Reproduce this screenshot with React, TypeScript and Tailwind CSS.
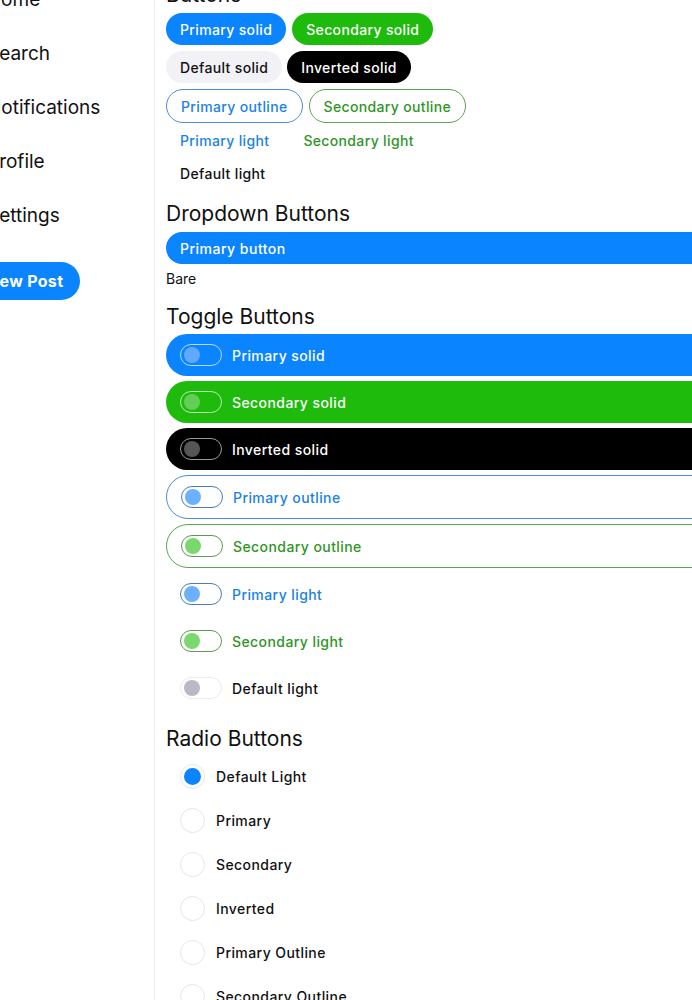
import React from 'react';

const font = { fontFamily: 'Inter, "Noto Sans", sans-serif' };

const navItems = ['Home', 'Search', 'Notifications', 'Profile', 'Settings'];

type ToggleKind =
  | 'primarySolid'
  | 'secondarySolid'
  | 'invertedSolid'
  | 'primaryOutline'
  | 'secondaryOutline'
  | 'primaryLight'
  | 'secondaryLight'
  | 'defaultLight';

const toggles: { kind: ToggleKind; label: string; row: string; track: string; knob: string; text: string }[] = [
  { kind: 'primarySolid', label: 'Primary solid', row: 'bg-[#0a84ff] h-[42px]', track: 'border-white/70', knob: 'bg-[#5fa9ff]', text: 'text-white' },
  { kind: 'secondarySolid', label: 'Secondary solid', row: 'bg-[#1eba0c] h-[42px]', track: 'border-white/70', knob: 'bg-[#62cf55]', text: 'text-white' },
  { kind: 'invertedSolid', label: 'Inverted solid', row: 'bg-black h-[42px]', track: 'border-[#9a9a9a]', knob: 'bg-[#555555]', text: 'text-white' },
  { kind: 'primaryOutline', label: 'Primary outline', row: 'h-[44px] border-[1.5px] border-[#4a8fd8] pl-[13px]', track: 'border-[#4b7bbd]', knob: 'bg-[#6cb1ff]', text: 'text-[#1a82e6]' },
  { kind: 'secondaryOutline', label: 'Secondary outline', row: 'h-[44px] border-[1.5px] border-[#5aa352] pl-[13px]', track: 'border-[#5a9a52]', knob: 'bg-[#7bd86f]', text: 'text-[#2f9526]' },
  { kind: 'primaryLight', label: 'Primary light', row: 'h-[42px]', track: 'border-[#4b7bbd]', knob: 'bg-[#6cb1ff]', text: 'text-[#1a82e6]' },
  { kind: 'secondaryLight', label: 'Secondary light', row: 'h-[42px]', track: 'border-[#5a9a52]', knob: 'bg-[#7bd86f]', text: 'text-[#2f9526]' },
  { kind: 'defaultLight', label: 'Default light', row: 'h-[42px]', track: 'border-[#ececec]', knob: 'bg-[#b9b9c6]', text: 'text-[#111111]' },
];

const radios = ['Default Light', 'Primary', 'Secondary', 'Inverted', 'Primary Outline', 'Secondary Outline'];

const Pill = ({ className, children }: { className: string; children: React.ReactNode }) => (
  <button className={`h-[32px] px-[14px] rounded-full text-[14px] font-medium tracking-[0.025em] flex items-center ${className}`}>
    {children}
  </button>
);

const Heading = ({ children, className = '' }: { children: React.ReactNode; className?: string }) => (
  <h2 className={`text-[21px] leading-[28px] text-[#111111] ${className}`}>{children}</h2>
);

export default function App() {
  return (
    <div className="w-[692px] h-[1000px] overflow-hidden bg-white" style={font}>
      <div className="flex w-[900px] -ml-[45px] -mt-[27px] min-h-[1100px]">
        {/* sidebar */}
        <aside className="w-[200px] shrink-0 border-r border-[#efefef] pl-[32px]">
          <nav className="flex flex-col">
            {navItems.map((item) => (
              <a key={item} className="h-[54px] flex items-center text-[19px] text-[#111111]">
                {item}
              </a>
            ))}
          </nav>
          <button className="mt-[19px] h-[38px] -ml-[17px] px-[17px] rounded-full bg-[#0a84ff] text-white text-[16px] font-bold tracking-[0.02em]">
            New Post
          </button>
        </aside>

        {/* main */}
        <main className="flex-1 pl-[11px] pt-[8px]">
          <Heading>Buttons</Heading>
          <div className="mt-[4px] flex gap-[6px]">
            <Pill className="bg-[#0a84ff] text-white">Primary solid</Pill>
            <Pill className="bg-[#1eba0c] text-white">Secondary solid</Pill>
          </div>
          <div className="mt-[6px] flex gap-[5px]">
            <Pill className="bg-[#f1f1f6] text-[#111111]">Default solid</Pill>
            <Pill className="bg-black text-white">Inverted solid</Pill>
          </div>
          <div className="mt-[6px] flex gap-[6px]">
            <Pill className="h-[34px] border-[1.5px] border-[#4a8fd8] text-[#1a82e6]">Primary outline</Pill>
            <Pill className="h-[34px] border-[1.5px] border-[#5aa352] text-[#2f9526]">Secondary outline</Pill>
          </div>
          <div className="mt-[1px] flex gap-[6px]">
            <Pill className="text-[#1a82e6]">Primary light</Pill>
            <Pill className="text-[#2f9526]">Secondary light</Pill>
          </div>
          <div className="mt-[1px] flex">
            <Pill className="text-[#111111]">Default light</Pill>
          </div>

          <Heading className="mt-[11px]">Dropdown Buttons</Heading>
          <button className="mt-[4px] w-full h-[32px] rounded-full bg-[#0a84ff] text-white text-[14px] font-medium tracking-[0.035em] text-left px-[14px]">
            Primary button
          </button>
          <div className="h-[22px] flex items-center text-[14px] text-[#111111] mt-[3px]">Bare</div>

          <Heading className="mt-[14px]">Toggle Buttons</Heading>
          <div className="mt-[3px] flex flex-col gap-[5px]">
            {toggles.map((t) => (
              <div key={t.kind} className={`rounded-full flex items-center pl-[14px] ${t.row}`}>
                <span className={`w-[42px] h-[22px] rounded-full border-[1.5px] flex items-center pl-[3px] ${t.track}`}>
                  <span className={`w-[16px] h-[16px] rounded-full ${t.knob}`} />
                </span>
                <span className={`ml-[10px] text-[14px] font-medium tracking-[0.03em] ${t.text}`}>{t.label}</span>
              </div>
            ))}
          </div>

          <Heading className="mt-[16px]">Radio Buttons</Heading>
          <div className="mt-[1px] flex flex-col">
            {radios.map((r, i) => (
              <label key={r} className="h-[44px] flex items-center pl-[14px]">
                <span className="w-[25px] h-[25px] rounded-full border border-[#e6e6e6] bg-white flex items-center justify-center">
                  {i === 0 && <span className="w-[17px] h-[17px] rounded-full bg-[#0a84ff]" />}
                </span>
                <span className="ml-[11px] text-[14px] font-medium tracking-[0.03em] text-[#111111]">{r}</span>
              </label>
            ))}
          </div>
        </main>
      </div>
    </div>
  );
}
